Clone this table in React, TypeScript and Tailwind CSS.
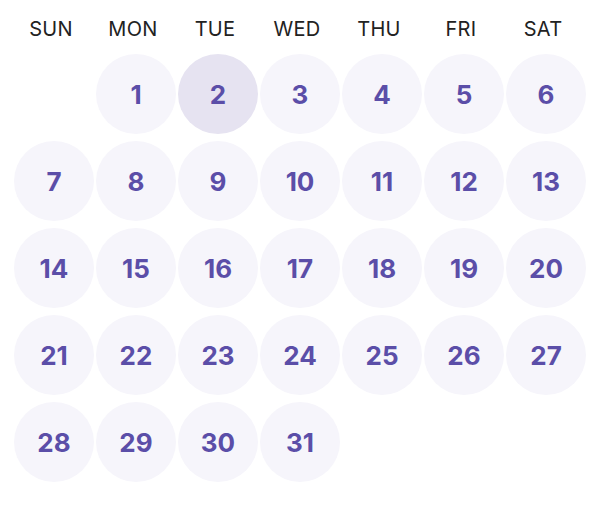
import React from "react";

const days = ["SUN", "MON", "TUE", "WED", "THU", "FRI", "SAT"];

export default function App() {
  const cells: (number | null)[] = [null];
  for (let i = 1; i <= 31; i++) cells.push(i);
  return (
    <div
      className="w-[600px] h-[518px] bg-white px-[14px]"
      style={{ fontFamily: "Inter, 'Noto Sans', sans-serif" }}
    >
      <div className="grid grid-cols-7 gap-x-[2px] pt-[17px] pb-[13px] ml-[-3px] mr-[3px]">
        {days.map((d) => (
          <div
            key={d}
            className="text-center text-[20px] leading-[24px] text-[#222222] tracking-[0.3px]"
          >
            {d}
          </div>
        ))}
      </div>
      <div className="grid grid-cols-7 gap-x-[2px] gap-y-[7px]">
        {cells.map((n, i) =>
          n === null ? (
            <div key={i} className="w-[80px] h-[80px]" />
          ) : (
            <div
              key={i}
              className={`w-[80px] h-[80px] rounded-full flex items-center justify-center text-[26px] font-bold text-[#5b4ea8] ${
                n === 2 ? "bg-[#e6e3f1]" : "bg-[#f6f5fb]"
              }`}
            >
              {n}
            </div>
          )
        )}
      </div>
    </div>
  );
}
